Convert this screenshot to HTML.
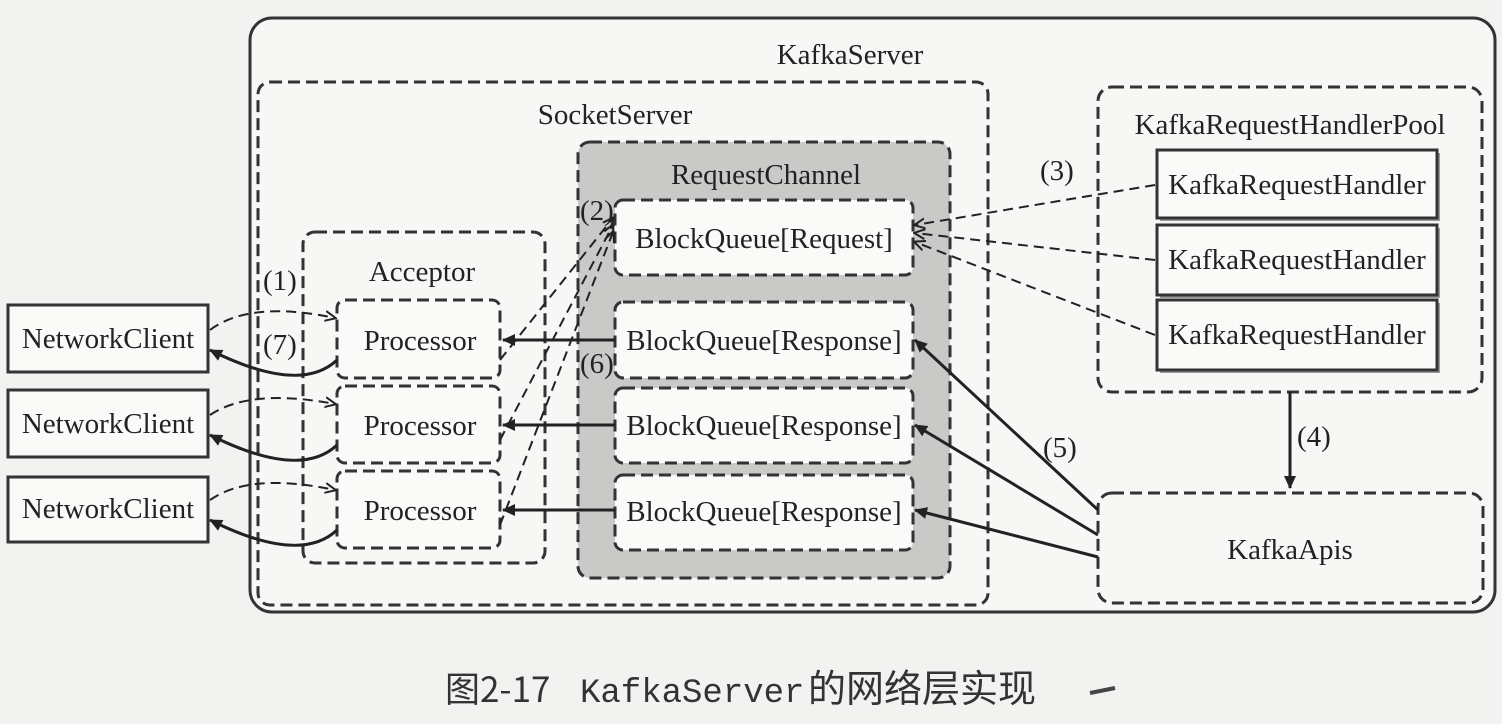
<!DOCTYPE html>
<html><head><meta charset="utf-8"><style>
html,body{margin:0;padding:0;background:#f2f2f0;width:1502px;height:724px;overflow:hidden}
svg text{font-family:"Liberation Serif",serif;font-size:29px;fill:#222}
</style></head><body>
<svg width="1502" height="724" viewBox="0 0 1502 724" xmlns="http://www.w3.org/2000/svg">
<defs>
<marker id="a" markerWidth="12" markerHeight="12" refX="10" refY="6" orient="auto" markerUnits="userSpaceOnUse"><path d="M0,1 L11,6 L0,11" fill="none" stroke="#222" stroke-width="2"/></marker>
<marker id="f" markerWidth="14" markerHeight="12" refX="12" refY="6" orient="auto" markerUnits="userSpaceOnUse"><path d="M0,0 L13,6 L0,12 Z" fill="#222"/></marker>
</defs>
<g fill="none" stroke="#333" stroke-width="3">
<rect x="250" y="18" width="1245" height="594" rx="22" fill="#f7f7f5"/>
<g stroke-dasharray="12,6">
<rect x="258" y="82" width="730" height="523" rx="12" fill="#f7f7f5"/>
<rect x="578" y="142" width="372" height="436" rx="12" fill="#c9c9c7"/>
<rect x="303" y="232" width="242" height="331" rx="12" fill="#f7f7f5"/>
<rect x="615" y="200" width="298" height="75" rx="8" fill="#fafaf8"/>
<rect x="615" y="302" width="298" height="76" rx="8" fill="#fafaf8"/>
<rect x="615" y="388" width="298" height="75" rx="8" fill="#fafaf8"/>
<rect x="615" y="475" width="298" height="75" rx="8" fill="#fafaf8"/>
<rect x="337" y="300" width="163" height="78" rx="8" fill="#fafaf8"/>
<rect x="337" y="386" width="163" height="77" rx="8" fill="#fafaf8"/>
<rect x="337" y="471" width="163" height="77" rx="8" fill="#fafaf8"/>
<rect x="1098" y="87" width="384" height="305" rx="14" fill="#f7f7f5"/>
<rect x="1098" y="493" width="385" height="110" rx="14" fill="#f7f7f5"/>
</g>
<rect x="8" y="305" width="200" height="67" fill="#fafaf8"/>
<rect x="8" y="390" width="200" height="67" fill="#fafaf8"/>
<rect x="8" y="477" width="200" height="65" fill="#fafaf8"/>
<rect x="1160" y="153" width="280" height="68" fill="#999" stroke="none"/>
<rect x="1160" y="228" width="280" height="70" fill="#999" stroke="none"/>
<rect x="1160" y="303" width="280" height="70" fill="#999" stroke="none"/>
<rect x="1157" y="150" width="280" height="68" fill="#fafaf8"/>
<rect x="1157" y="225" width="280" height="70" fill="#fafaf8"/>
<rect x="1157" y="300" width="280" height="70" fill="#fafaf8"/>
</g>
<g fill="none" stroke="#222" stroke-width="2" stroke-dasharray="10,6">
<path d="M210,330 Q250,300 335,318" marker-end="url(#a)"/>
<path d="M210,415 Q250,388 335,404" marker-end="url(#a)"/>
<path d="M210,500 Q250,472 335,490" marker-end="url(#a)"/>
<path d="M500,360 L613,218" marker-end="url(#a)"/>
<path d="M500,440 L613,225" marker-end="url(#a)"/>
<path d="M500,525 L613,232" marker-end="url(#a)"/>
<path d="M1155,185 L915,225" marker-end="url(#a)"/>
<path d="M1155,260 L915,233" marker-end="url(#a)"/>
<path d="M1155,335 L915,242" marker-end="url(#a)"/>
</g>
<g fill="none" stroke="#222" stroke-width="3">
<path d="M337,360 Q300,395 210,350" marker-end="url(#f)"/>
<path d="M337,445 Q300,480 210,435" marker-end="url(#f)"/>
<path d="M337,530 Q300,565 210,520" marker-end="url(#f)"/>
<path d="M615,340 L503,340" marker-end="url(#f)"/>
<path d="M615,425 L503,425" marker-end="url(#f)"/>
<path d="M615,510 L503,510" marker-end="url(#f)"/>
<path d="M1098,510 L915,340" marker-end="url(#f)"/>
<path d="M1098,535 L915,425" marker-end="url(#f)"/>
<path d="M1098,557 L915,510" marker-end="url(#f)"/>
<path d="M1290,392 L1290,488" marker-end="url(#f)"/>
</g>
<text x="850" y="64" text-anchor="middle">KafkaServer</text>
<text x="615" y="124" text-anchor="middle">SocketServer</text>
<text x="766" y="184" text-anchor="middle">RequestChannel</text>
<text x="422" y="281" text-anchor="middle">Acceptor</text>
<text x="764" y="248" text-anchor="middle">BlockQueue[Request]</text>
<text x="764" y="350" text-anchor="middle">BlockQueue[Response]</text>
<text x="764" y="435" text-anchor="middle">BlockQueue[Response]</text>
<text x="764" y="521" text-anchor="middle">BlockQueue[Response]</text>
<text x="420" y="350" text-anchor="middle">Processor</text>
<text x="420" y="435" text-anchor="middle">Processor</text>
<text x="420" y="520" text-anchor="middle">Processor</text>
<text x="108" y="348" text-anchor="middle">NetworkClient</text>
<text x="108" y="433" text-anchor="middle">NetworkClient</text>
<text x="108" y="518" text-anchor="middle">NetworkClient</text>
<text x="1290" y="134" text-anchor="middle">KafkaRequestHandlerPool</text>
<text x="1297" y="194" text-anchor="middle">KafkaRequestHandler</text>
<text x="1297" y="269" text-anchor="middle">KafkaRequestHandler</text>
<text x="1297" y="344" text-anchor="middle">KafkaRequestHandler</text>
<text x="1290" y="559" text-anchor="middle">KafkaApis</text>
<text x="263" y="290">(1)</text>
<text x="263" y="354">(7)</text>
<text x="580" y="220">(2)</text>
<text x="580" y="373">(6)</text>
<text x="1040" y="180">(3)</text>
<text x="1297" y="446">(4)</text>
<text x="1043" y="457">(5)</text>
<text x="445" y="702" style="font-family:'Noto Sans CJK SC',sans-serif;font-size:35px;fill:#333">图2-17</text>
<text x="580" y="702" style="font-family:'Liberation Mono',monospace;font-size:34px;fill:#333">KafkaServer</text>
<text x="808" y="702" style="font-family:'Noto Sans CJK SC',sans-serif;font-size:38px;fill:#333">的网络层实现</text>
<path d="M1090,693 L1115,688" stroke="#444" stroke-width="4"/>
</svg>
</body></html>
